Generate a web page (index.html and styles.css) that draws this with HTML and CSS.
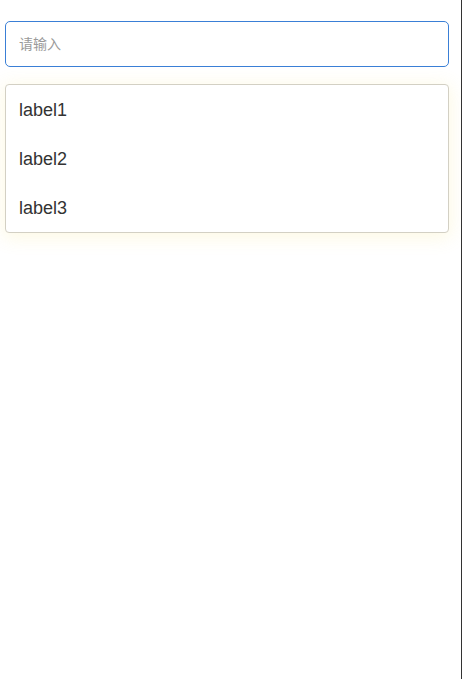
FILE: index.html
```html
<!DOCTYPE html>
<html lang="zh">
<head>
<meta charset="utf-8">
<link rel="stylesheet" href="styles.css">
</head>
<body>
<div class="page">
  <div class="search">
    <input class="search-input" type="text" placeholder="请输入">
  </div>
  <ul class="dropdown">
    <li class="dropdown-item">label1</li>
    <li class="dropdown-item">label2</li>
    <li class="dropdown-item">label3</li>
  </ul>
</div>
</body>
</html>
```
FILE: styles.css
```css
html, body {
  margin: 0;
  padding: 0;
  background: #ffffff;
  height: 100%;
}
body {
  font-family: "Liberation Sans", Arial, "Noto Sans CJK SC", sans-serif;
  border-right: 1px solid #333333;
  box-sizing: border-box;
  width: 462px;
}
.page {
  padding: 21px 12px 0 5px;
  display: flex;
  flex-direction: column;
  gap: 17px;
}
.search {
  display: flex;
}
.search-input {
  flex: 1;
  height: 46px;
  box-sizing: border-box;
  border: 1px solid #3a7fd6;
  border-radius: 5px;
  padding: 0 13px;
  font-size: 14px;
  font-family: "Liberation Sans", "Noto Sans CJK SC", sans-serif;
  color: #333;
  outline: none;
  background: #fff;
}
.search-input::placeholder {
  color: #9a9a9a;
}
.dropdown {
  list-style: none;
  margin: 0;
  padding: 0;
  border: 1px solid #d3d0c4;
  border-radius: 4px;
  background: #fff;
  box-shadow: 0 3px 18px 2px rgba(245, 215, 90, 0.16);
}
.dropdown-item {
  height: 49px;
  line-height: 47px;
  padding: 2px 13px 0;
  box-sizing: border-box;
  font-size: 18px;
  color: #333333;
}
```
